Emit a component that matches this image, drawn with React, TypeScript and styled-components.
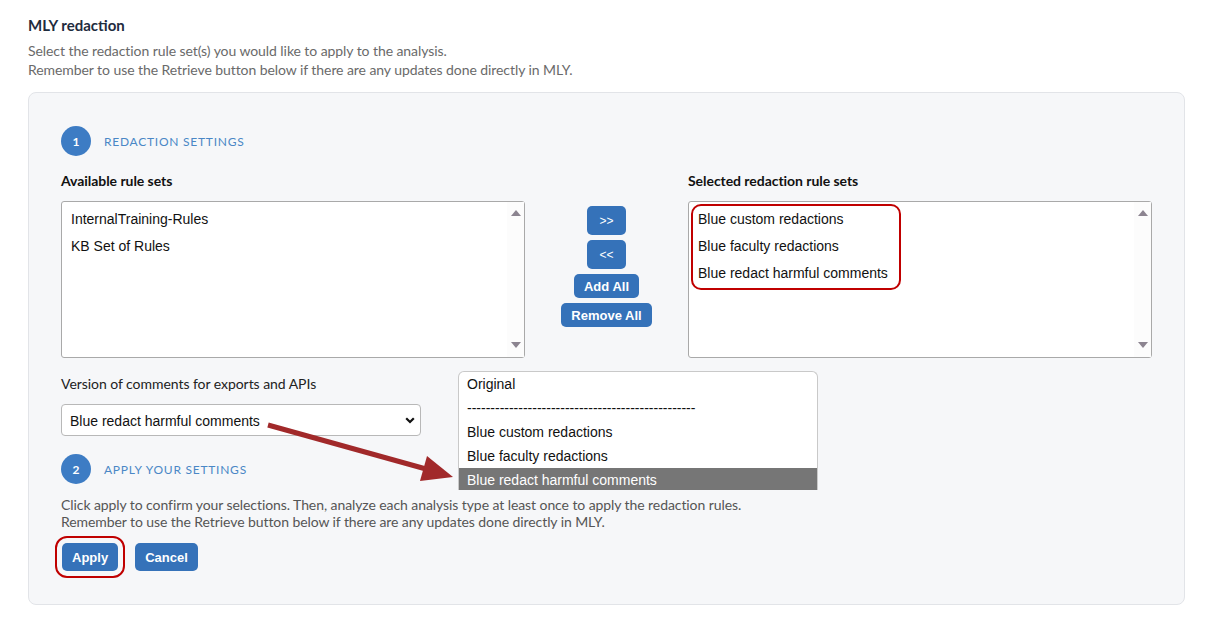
import React from "react"
import styled, { createGlobalStyle } from "styled-components"

const Global = createGlobalStyle`
  body {
    margin: 0;
    background: #ffffff;
    font-family: Lato, "Open Sans", sans-serif;
  }
`

const Page = styled.div`
  padding: 16px 28px 0 28px;
  width: 1157px;
`

const Title = styled.h1`
  margin: 0;
  font-size: 15px;
  line-height: 18px;
  font-weight: 700;
  color: #1f2c3e;
`

const Intro = styled.p`
  margin: 7px 0 13px 0;
  font-size: 14px;
  line-height: 19px;
  letter-spacing: -0.07px;
  color: #6a6a6a;
`

const Panel = styled.div`
  position: relative;
  background: #f6f7f9;
  border: 1px solid #e2e4e8;
  border-radius: 8px;
  padding: 33px 32px 33px 32px;
`

const StepRow = styled.div`
  display: flex;
  align-items: center;
  gap: 13px;
`

const StepNum = styled.div`
  width: 30px;
  height: 30px;
  border-radius: 50%;
  background: #3d7cc4;
  color: #ffffff;
  font-size: 12px;
  font-weight: 700;
  display: flex;
  align-items: center;
  justify-content: center;
`

const StepLabel = styled.span`
  font-size: 12px;
  letter-spacing: 0.75px;
  text-transform: uppercase;
  color: #4a87c6;
`

const Lists = styled.div`
  display: grid;
  grid-template-columns: 464px 1fr 464px;
  grid-template-rows: auto 157px;
  row-gap: 11px;
  margin-top: 16px;
`

const Label = styled.div<{ $bold?: boolean }>`
  font-size: 14px;
  line-height: 18px;
  letter-spacing: -0.05px;
  font-weight: ${(p) => (p.$bold ? 700 : 400)};
  color: ${(p) => (p.$bold ? "#111111" : "#222222")};
`

const ListBox = styled.div`
  position: relative;
  display: flex;
  background: #ffffff;
  border: 1px solid #a9a9a9;
  border-radius: 3px;
  font-family: "Liberation Sans", Arial, sans-serif;
  font-size: 14px;
  color: #111111;
`

const Items = styled.div`
  flex: 1;
  padding-top: 4px;
`

const Item = styled.div`
  line-height: 27px;
  padding: 0 9px;
`

const ScrollCol = styled.div`
  width: 17px;
  display: flex;
  flex-direction: column;
  justify-content: space-between;
  align-items: center;
  padding: 8px 0 9px 0;
  background: #fcfcfc;
`

const Tri = styled.span<{ $down?: boolean }>`
  width: 0;
  height: 0;
  border-left: 5px solid transparent;
  border-right: 5px solid transparent;
  ${(p) =>
    p.$down
      ? "border-top: 6px solid #8c8490;"
      : "border-bottom: 6px solid #8c8490;"}
`

const Highlight = styled.span`
  position: absolute;
  left: 2px;
  top: 2px;
  width: 210px;
  height: 86px;
  box-sizing: border-box;
  border: 2px solid #c00000;
  border-radius: 10px;
  pointer-events: none;
`

const MoveCol = styled.div`
  display: flex;
  flex-direction: column;
  align-items: center;
  gap: 5px;
  padding-top: 5px;
`

const BlueButton = styled.button<{ $small?: boolean }>`
  border: none;
  border-radius: 5px;
  background: #3572b9;
  color: #ffffff;
  font-family: "Liberation Sans", Arial, sans-serif;
  font-size: ${(p) => (p.$small ? "12px" : "13px")};
  font-weight: ${(p) => (p.$small ? 400 : 700)};
  height: ${(p) => (p.$small ? "29px" : "24px")};
  width: ${(p) => (p.$small ? "39px" : "auto")};
  padding: ${(p) => (p.$small ? "0" : "0 10px")};
  cursor: pointer;
`

const VersionBlock = styled.div`
  margin-top: 17px;
  display: flex;
  flex-direction: column;
  gap: 11px;
`

const FakeSelect = styled.div`
  width: 360px;
  height: 32px;
  box-sizing: border-box;
  display: flex;
  align-items: center;
  justify-content: space-between;
  padding: 1px 5px 0 8px;
  background: #ffffff;
  border: 1px solid #b8b8b8;
  border-radius: 4px;
  font-family: "Liberation Sans", Arial, sans-serif;
  font-size: 14px;
  color: #111111;
`

const Step2 = styled(StepRow)`
  margin-top: 18px;
`

const Note = styled.p`
  margin: 12px 0 0 0;
  font-size: 14px;
  line-height: 17px;
  letter-spacing: -0.08px;
  color: #555555;
`

const Actions = styled.div`
  display: flex;
  gap: 17px;
  margin-top: 13px;
  padding-left: 1px;
`

const ActionButton = styled.button<{ $marked?: boolean }>`
  height: 28px;
  padding: 0 10px;
  border: none;
  border-radius: 5px;
  background: #3572b9;
  color: #ffffff;
  font-family: "Liberation Sans", Arial, sans-serif;
  font-size: 13px;
  font-weight: 700;
  outline: ${(p) => (p.$marked ? "2px solid #c00000" : "none")};
  outline-offset: 5px;
`

const Popup = styled.div`
  position: absolute;
  left: 429px;
  top: 278px;
  width: 360px;
  height: 119px;
  box-sizing: border-box;
  overflow: hidden;
  background: #ffffff;
  border: 1px solid #c9c9c9;
  border-bottom: none;
  border-radius: 6px 6px 0 0;
  font-family: "Liberation Sans", Arial, sans-serif;
  font-size: 14px;
  color: #111111;
`

const Option = styled.div<{ $active?: boolean }>`
  height: 24px;
  line-height: 24px;
  padding: 0 8px;
  white-space: nowrap;
  background: ${(p) => (p.$active ? "#767676" : "transparent")};
  color: ${(p) => (p.$active ? "#ffffff" : "#111111")};
`

const Pointer = styled.svg`
  position: absolute;
  left: 231px;
  top: 322px;
  overflow: visible;
  pointer-events: none;
`

const available = ["InternalTraining-Rules", "KB Set of Rules"]
const selected = [
  "Blue custom redactions",
  "Blue faculty redactions",
  "Blue redact harmful comments",
]

const Scroll = () => (
  <ScrollCol>
    <Tri />
    <Tri $down />
  </ScrollCol>
)

export default function App() {
  return (
    <Page>
      <Global />
      <Title>MLY redaction</Title>
      <Intro>
        Select the redaction rule set(s) you would like to apply to the analysis.
        <br />
        Remember to use the Retrieve button below if there are any updates done directly in MLY.
      </Intro>
      <Panel>
        <StepRow>
          <StepNum>1</StepNum>
          <StepLabel>Redaction settings</StepLabel>
        </StepRow>
        <Lists>
          <Label $bold>Available rule sets</Label>
          <div />
          <Label $bold>Selected redaction rule sets</Label>
          <ListBox>
            <Items>
              {available.map((a) => (
                <Item key={a}>{a}</Item>
              ))}
            </Items>
            <Scroll />
          </ListBox>
          <MoveCol>
            <BlueButton $small>&gt;&gt;</BlueButton>
            <BlueButton $small>&lt;&lt;</BlueButton>
            <BlueButton>Add All</BlueButton>
            <BlueButton>Remove All</BlueButton>
          </MoveCol>
          <ListBox>
            <Items>
              {selected.map((s) => (
                <Item key={s}>{s}</Item>
              ))}
            </Items>
            <Scroll />
            <Highlight />
          </ListBox>
        </Lists>
        <VersionBlock>
          <Label>Version of comments for exports and APIs</Label>
          <FakeSelect>
            <span>Blue redact harmful comments</span>
            <svg width="10" height="7" viewBox="0 0 10 7">
              <polyline points="1.2,1.2 5,5 8.8,1.2" fill="none" stroke="#111" strokeWidth="2.2" />
            </svg>
          </FakeSelect>
        </VersionBlock>
        <Step2>
          <StepNum>2</StepNum>
          <StepLabel>Apply your settings</StepLabel>
        </Step2>
        <Note>
          Click apply to confirm your selections. Then, analyze each analysis type at least once to apply the redaction rules.
          <br />
          Remember to use the Retrieve button below if there are any updates done directly in MLY.
        </Note>
        <Actions>
          <ActionButton $marked>Apply</ActionButton>
          <ActionButton>Cancel</ActionButton>
        </Actions>

        <Popup>
          <Option>Original</Option>
          <Option>{"-".repeat(49)}</Option>
          <Option>Blue custom redactions</Option>
          <Option>Blue faculty redactions</Option>
          <Option $active>Blue redact harmful comments</Option>
        </Popup>
        <Pointer width="200" height="72" viewBox="0 0 200 72">
          <line x1="8" y1="10" x2="166" y2="54" stroke="#a1292a" strokeWidth="5" />
          <polygon points="193,62 160,66 167,41" fill="#a1292a" />
        </Pointer>
      </Panel>
    </Page>
  )
}
